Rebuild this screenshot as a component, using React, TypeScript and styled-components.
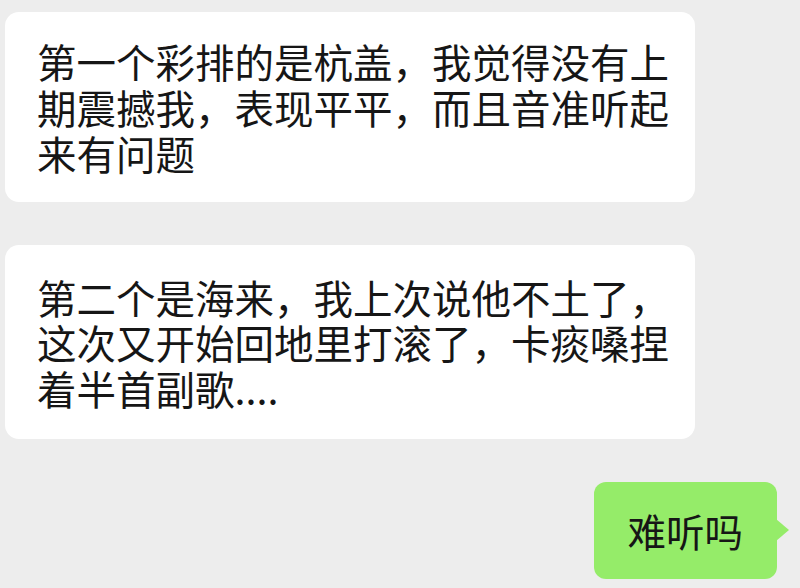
import React, { FC } from 'react';
import styled, { createGlobalStyle } from 'styled-components';

const GlobalStyle = createGlobalStyle`
  html, body {
    margin: 0;
    padding: 0;
    background: #ededed;
  }
`;

const messages = [
  { id: 1, text: '第一个彩排的是杭盖，我觉得没有上期震撼我，表现平平，而且音准听起来有问题', lineHeight: 46, padY: 26 },
  { id: 2, text: '第二个是海来，我上次说他不土了，这次又开始回地里打滚了，卡痰嗓捏着半首副歌....', lineHeight: 45.5, padY: 28.5 },
];

export const App: FC = () => {
  return (
    <>
      <GlobalStyle />
      <Chat>
        {messages.map((item) => (
          <Bubble key={item.id} lineHeight={item.lineHeight} padY={item.padY}>
            {item.text}
          </Bubble>
        ))}
        <MyBubble>难听吗</MyBubble>
      </Chat>
    </>
  );
};

export default App;

const Chat = styled.div`
  width: 800px;
  height: 588px;
  box-sizing: border-box;
  padding: 12px 0 0 5px;
  background: #ededed;
  display: flex;
  flex-direction: column;
  row-gap: 43px;
  font-family: 'Noto Sans CJK SC', 'Noto Sans', sans-serif;
  color: #161616;
  overflow: hidden;
`;

const Bubble = styled.div<{ lineHeight: number; padY: number }>`
  width: 690px;
  box-sizing: border-box;
  padding: ${(p) => p.padY}px 20px ${(p) => p.padY}px 32px;
  background: #ffffff;
  border-radius: 14px;
  font-size: 39.5px;
  line-height: ${(p) => p.lineHeight}px;
`;

const MyBubble = styled.div`
  position: relative;
  align-self: flex-end;
  margin-right: 23px;
  height: 97px;
  box-sizing: border-box;
  padding: 0 34px 0 33px;
  display: flex;
  align-items: center;
  background: #95ec69;
  border-radius: 12px;
  font-size: 38.5px;
  line-height: 1;

  &::after {
    content: '';
    position: absolute;
    right: -12px;
    top: 50%;
    transform: translateY(-50%);
    border-top: 11px solid transparent;
    border-bottom: 11px solid transparent;
    border-left: 13px solid #95ec69;
  }
`;
